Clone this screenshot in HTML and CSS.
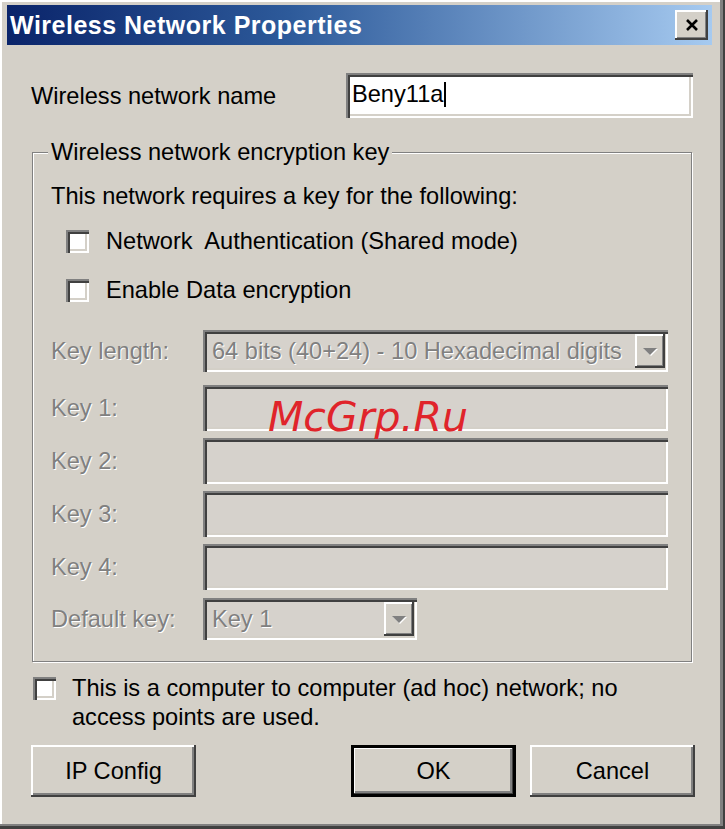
FILE: index.html
```html
<!DOCTYPE html>
<html lang="en">
<head>
  <meta charset="UTF-8">
  <title>Wireless Network Properties</title>
  <link rel="stylesheet" href="styles.css">
</head>
<body>

  <div class="window">
    <div class="titlebar">
      <span class="title">Wireless Network Properties</span>
      <span class="close">
        <svg width="14" height="12" viewBox="0 0 14 12">
          <path d="M2 1 L12 11 M12 1 L2 11" stroke="#000" stroke-width="2.6" fill="none"/>
        </svg>
      </span>
    </div>

    <div class="client">
      <div class="name-row">
        <label class="name-label">Wireless network name</label>
        <div class="textbox">Beny11a<span class="caret"></span></div>
      </div>

      <fieldset class="group">
        <legend>Wireless network encryption key</legend>
        <p class="intro">This network requires a key for the following:</p>

        <div class="check-row first">
          <span class="checkbox"></span>
          <span>Network&nbsp; Authentication (Shared mode)</span>
        </div>
        <div class="check-row second">
          <span class="checkbox"></span>
          <span>Enable Data encryption</span>
        </div>

        <!-- disabled key settings -->
        <div class="key-row length">
          <span class="dim key-label">Key length:</span>
          <div class="combo wide">
            <span class="dim">64 bits (40+24) - 10 Hexadecimal digits</span>
            <span class="drop"><span class="arrow"></span></span>
          </div>
        </div>
        <div class="key-row key1">
          <span class="dim key-label">Key 1:</span>
          <div class="field"></div>
        </div>
        <div class="key-row">
          <span class="dim key-label">Key 2:</span>
          <div class="field"></div>
        </div>
        <div class="key-row">
          <span class="dim key-label">Key 3:</span>
          <div class="field"></div>
        </div>
        <div class="key-row">
          <span class="dim key-label">Key 4:</span>
          <div class="field"></div>
        </div>
        <div class="key-row default">
          <span class="dim key-label">Default key:</span>
          <div class="combo narrow">
            <span class="dim">Key 1</span>
            <span class="drop"><span class="arrow"></span></span>
          </div>
        </div>
      </fieldset>

      <div class="adhoc">
        <span class="checkbox"></span>
        <span>This is a computer to computer (ad hoc) network; no<br>access points are used.</span>
      </div>

      <div class="buttons">
        <button class="btn">IP Config</button>
        <button class="btn ok">OK</button>
        <button class="btn">Cancel</button>
      </div>
    </div>

    <div class="watermark">McGrp.Ru</div>
  </div>

</body>
</html>
```

FILE: styles.css
```css
body {
  margin: 0;
  background: #d4d0c8;
  font-family: "Liberation Sans", Arial, sans-serif;
  font-size: 23.6px;
  line-height: 26px;
  color: #000;
}

.window {
  position: relative;
  height: 829px;
  box-sizing: border-box;
  padding: 5px 13px 0 7px;
  background: #d4d0c8;
  box-shadow: inset -2px -3px #404040, inset -5px -5px #808080, inset 2px 2px #fff;
}

.titlebar {
  height: 40px;
  display: flex;
  align-items: center;
  justify-content: space-between;
  padding-left: 3px;
  background: linear-gradient(to right, #0a246a, #2d5a9a 40%, #a6caf0);
}

.title {
  color: #fff;
  font-weight: bold;
  font-size: 25px;
  letter-spacing: 0.5px;
}

.close {
  width: 33px;
  height: 30px;
  margin-right: 4px;
  display: flex;
  align-items: center;
  justify-content: center;
  background: #d4d0c8;
  box-shadow: inset -2px -2px #404040, inset 2px 2px #fff, inset -3px -3px #808080;
}

.name-row {
  display: flex;
  align-items: center;
  margin-top: 28px;
  padding-left: 24px;
}

.name-label {
  width: 315px;
}

.textbox {
  width: 347px;
  height: 45px;
  box-sizing: border-box;
  padding: 8px 6px 0;
  background: #fff;
  box-shadow: inset 2px 2px #808080, inset 4px 4px #404040, inset -2px -2px #fff, inset -4px -4px #d4d0c8;
}

.caret {
  display: inline-block;
  width: 2px;
  height: 25px;
  margin-left: 1px;
  vertical-align: -5px;
  background: #000;
}

.group {
  width: 660px;
  box-sizing: border-box;
  margin: 21px 0 0 25px;
  padding: 0 0 21px 18px;
  border: 1px solid #808080;
  box-shadow: 1px 1px 0 #fff, inset 1px 1px 0 #fff;
}

.group legend {
  margin-left: -3px;
  padding: 0 3px;
  background: #d4d0c8;
}

.intro {
  margin: 18px 0 0;
}

.check-row {
  display: flex;
  align-items: center;
  gap: 17px;
  padding-left: 15px;
}

.check-row.first {
  margin-top: 19px;
}

.check-row.second {
  margin-top: 23px;
}

.checkbox {
  flex: none;
  width: 23px;
  height: 23px;
  box-sizing: border-box;
  background: #fff;
  box-shadow: inset 2px 2px #808080, inset 4px 4px #404040, inset -2px -2px #fff, inset -4px -4px #d4d0c8;
}

.dim {
  color: #808080;
  text-shadow: 1px 1px 0 #fff;
}

.key-row {
  display: flex;
  align-items: center;
  margin-top: 7px;
}

.key-row.length {
  margin-top: 27px;
}

.key-row.key1 {
  margin-top: 13px;
}

.key-row.default {
  margin-top: 8px;
}

.key-label {
  width: 152px;
}

.field {
  width: 465px;
  height: 46px;
  box-sizing: border-box;
  background: #d6d2cc;
  box-shadow: inset 2px 2px #808080, inset 4px 4px #404040, inset -2px -2px #fff, inset -4px -4px #d4d0c8;
}

.combo {
  height: 42px;
  box-sizing: border-box;
  display: flex;
  align-items: center;
  justify-content: space-between;
  padding: 4px 3px 4px 9px;
  background: #d6d2cc;
  box-shadow: inset 2px 2px #808080, inset 4px 4px #404040, inset -2px -2px #fff, inset -4px -4px #d4d0c8;
}

.combo.wide {
  width: 465px;
}

.combo.narrow {
  width: 214px;
}

.drop {
  width: 30px;
  height: 34px;
  display: flex;
  align-items: center;
  justify-content: center;
  background: #d4d0c8;
  box-shadow: inset -2px -2px #404040, inset 2px 2px #fff, inset -3px -3px #808080;
}

.arrow {
  width: 0;
  height: 0;
  border-left: 7px solid transparent;
  border-right: 7px solid transparent;
  border-top: 7px solid #808080;
  filter: drop-shadow(1px 1px 0 #fff);
}

.adhoc {
  display: flex;
  align-items: flex-start;
  gap: 16px;
  margin: 12px 0 0 26px;
  line-height: 29px;
}

.adhoc .checkbox {
  margin-top: 3px;
}

.buttons {
  display: flex;
  width: 664px;
  margin: 13px 0 0 24px;
}

.btn {
  width: 165px;
  height: 52px;
  padding: 0;
  border: none;
  font: inherit;
  color: #000;
  background: #d4d0c8;
  box-shadow: inset -2px -2px #404040, inset 2px 2px #fff, inset -4px -4px #808080;
}

.btn.ok {
  margin-left: auto;
  margin-right: 14px;
  box-shadow: inset 0 0 0 3px #000, inset -4px -4px #404040, inset 4px 4px #fff, inset -6px -6px #808080;
}

.watermark {
  position: absolute;
  left: 268px;
  top: 397px;
  font-family: "DejaVu Sans", sans-serif;
  font-style: italic;
  font-size: 41px;
  line-height: 1;
  color: #e0242a;
}
```
